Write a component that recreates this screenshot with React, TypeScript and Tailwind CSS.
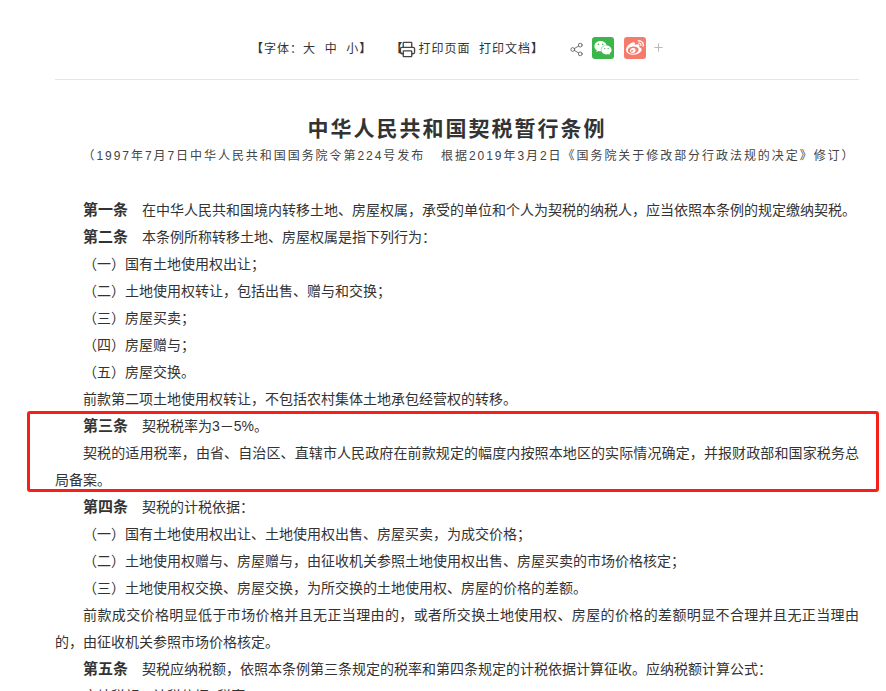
import { Printer, Share2, Plus } from "lucide-react";
import { FaWeixin, FaWeibo } from "react-icons/fa";

const font = "font-['Liberation_Sans','Noto_Sans_CJK_SC',sans-serif]";

type Para = { head?: string; text: string };

const paras: Para[] = [
  { head: "第一条", text: "在中华人民共和国境内转移土地、房屋权属，承受的单位和个人为契税的纳税人，应当依照本条例的规定缴纳契税。" },
  { head: "第二条", text: "本条例所称转移土地、房屋权属是指下列行为：" },
  { text: "（一）国有土地使用权出让；" },
  { text: "（二）土地使用权转让，包括出售、赠与和交换；" },
  { text: "（三）房屋买卖；" },
  { text: "（四）房屋赠与；" },
  { text: "（五）房屋交换。" },
  { text: "前款第二项土地使用权转让，不包括农村集体土地承包经营权的转移。" },
  { head: "第三条", text: "契税税率为3－5%。" },
  { text: "契税的适用税率，由省、自治区、直辖市人民政府在前款规定的幅度内按照本地区的实际情况确定，并报财政部和国家税务总局备案。" },
  { head: "第四条", text: "契税的计税依据：" },
  { text: "（一）国有土地使用权出让、土地使用权出售、房屋买卖，为成交价格；" },
  { text: "（二）土地使用权赠与、房屋赠与，由征收机关参照土地使用权出售、房屋买卖的市场价格核定；" },
  { text: "（三）土地使用权交换、房屋交换，为所交换的土地使用权、房屋的价格的差额。" },
  { text: "前款成交价格明显低于市场价格并且无正当理由的，或者所交换土地使用权、房屋的价格的差额明显不合理并且无正当理由的，由征收机关参照市场价格核定。" },
  { head: "第五条", text: "契税应纳税额，依照本条例第三条规定的税率和第四条规定的计税依据计算征收。应纳税额计算公式：" },
  { text: "应纳税额＝计税依据×税率" },
];

export default function App() {
  return (
    <div className={`relative h-[691px] w-[886px] overflow-hidden bg-white text-[#333] ${font}`}>
      <div className="ml-[55px] w-[804px]">
        <div className="flex h-[80px] items-start border-b border-[#e5e5e5] pt-[35px] pl-[196px] text-[12px] tracking-[1px]">
          <div className="flex h-[28px] items-center">
            <span className="mr-[18px] whitespace-nowrap">
              <b>【</b>字体：大&nbsp;&nbsp;中&nbsp;&nbsp;小<b>】</b>
            </span>
            <span className="flex items-center whitespace-nowrap">
              <b>【</b>
              <Printer size={17} strokeWidth={1.9} className="mr-[2px] ml-[-4px] text-[#444]" />
              打印页面&nbsp;&nbsp;打印文档<b>】</b>
            </span>
            <Share2 size={15} strokeWidth={1.5} className="mr-[8px] ml-[25px] text-[#666]" />
            <span className="mt-[-3px] mr-[10px] flex h-[22px] w-[22px] items-center justify-center rounded-[3px] bg-[#3cb54a] text-white">
              <FaWeixin size={18} />
            </span>
            <span className="mt-[-3px] mr-[6px] flex h-[22px] w-[22px] items-center justify-center rounded-[3px] bg-[#f77b6c] text-white">
              <FaWeibo size={18} />
            </span>
            <Plus size={13} strokeWidth={2} className="mt-[-3px] text-[#bbb]" />
          </div>
        </div>

        <h1 className="mt-[33px] text-center text-[21px] leading-[32px] font-bold tracking-[2px] text-[#333]">
          中华人民共和国契税暂行条例
        </h1>
        <p className="mt-[1px] pl-[24px] text-center text-[12px] leading-[20px] tracking-[1.95px] whitespace-nowrap text-[#444]">
          （1997年7月7日中华人民共和国国务院令第224号发布&nbsp;&nbsp;&nbsp;根据2019年3月2日《国务院关于修改部分行政法规的决定》修订）
        </p>

        <div className="mt-[31px] text-justify text-[14px] leading-[27px]">
          {paras.map((p, i) => (
            <p key={i} className="indent-[28px]">
              {p.head && <strong className="mr-[14px] text-[15px] leading-none font-bold">{p.head}</strong>}
              {p.text}
            </p>
          ))}
        </div>
      </div>

      {/* red highlight drawn on top of the article */}
      <div className="absolute top-[411px] left-[27px] h-[81px] w-[852px] rounded-[3px] border-[3px] border-[#f5201a]" />
    </div>
  );
}
